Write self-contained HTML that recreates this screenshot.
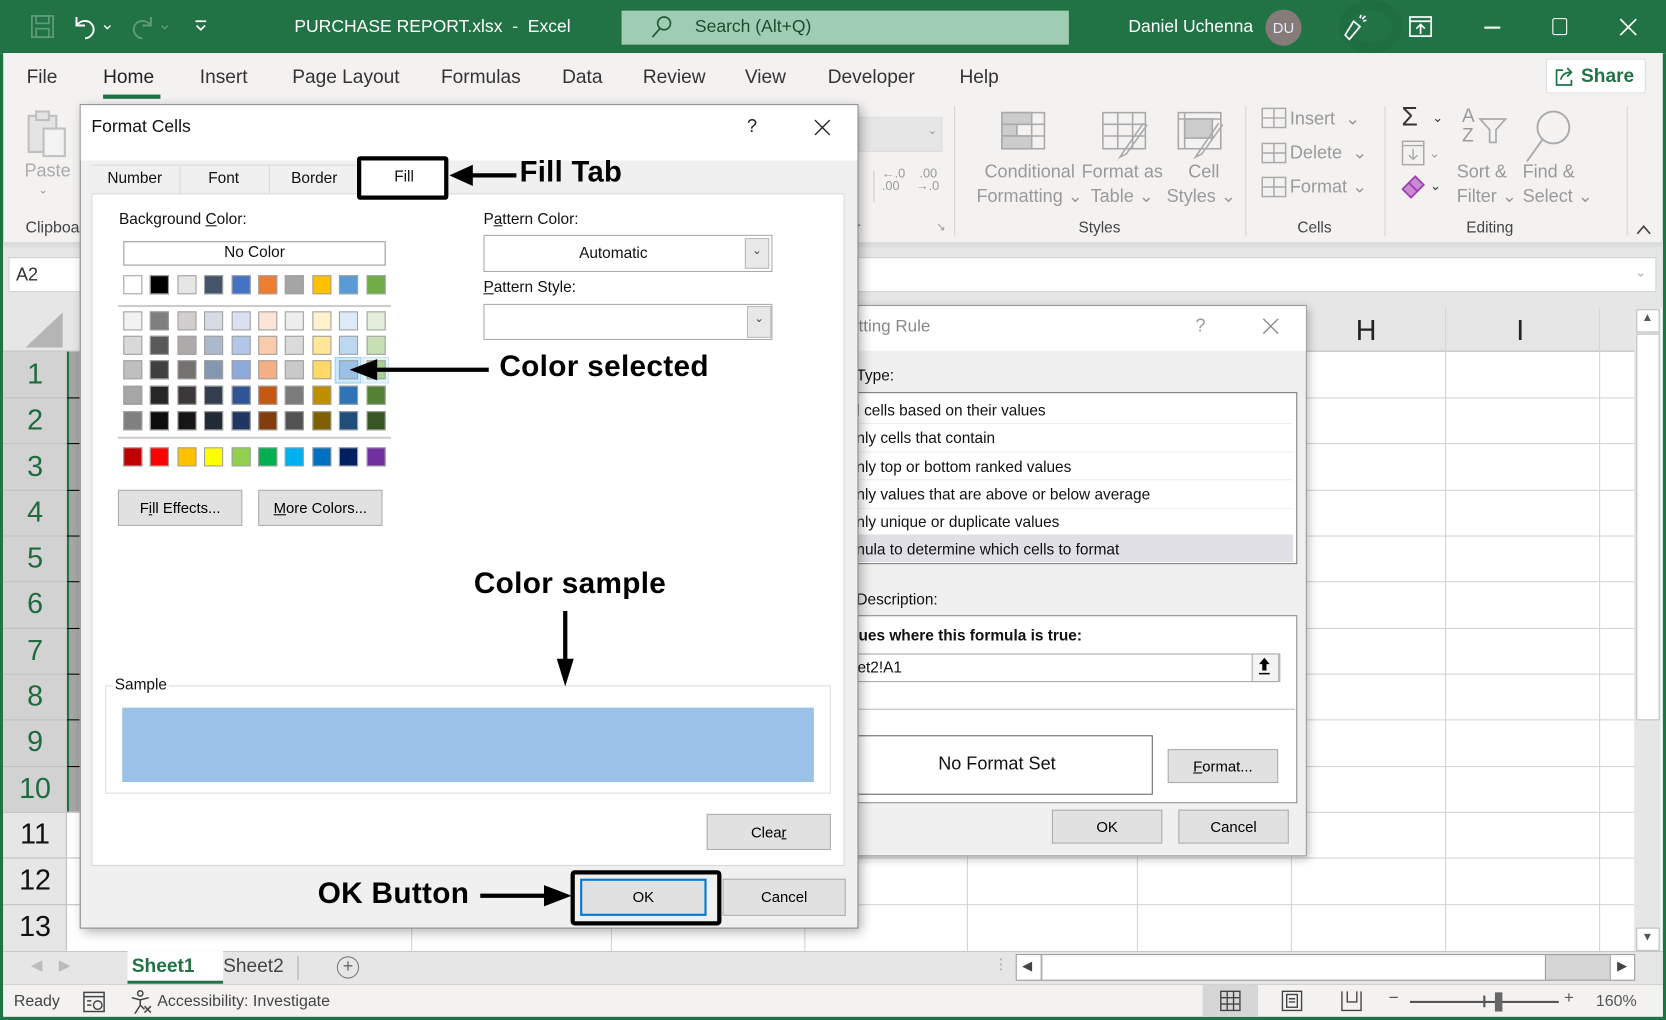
<!DOCTYPE html>
<html><head><meta charset="utf-8">
<style>
*{margin:0;padding:0;box-sizing:border-box}
html,body{width:1666px;height:1020px;overflow:hidden;background:#fff}
#w{position:absolute;left:0;top:0;width:1568px;height:960px;transform:scale(1.0625);transform-origin:0 0;font-family:"Liberation Sans",sans-serif;color:#222;overflow:hidden;background:#fff}
.a{position:absolute}
.t{position:absolute;white-space:nowrap}
.g{color:#9a9a9a}
.btn{position:absolute;background:#e1e1e1;border:1px solid #adadad;font-size:14px;text-align:center;color:#000}
.sw{position:absolute;width:18px;height:18px;border:1px solid #a0a0a0}
.ann{position:absolute;white-space:nowrap;font-weight:bold;font-size:27.5px;color:#000;letter-spacing:0.3px}
</style></head><body><div id="w">

<!-- title bar -->
<div class="a" style="left:0;top:0;width:1568px;height:50px;background:#217346"></div>
<div class="a" style="left:1260px;top:0;width:60px;height:50px;border-radius:50%;border:10px solid #1e6a40;opacity:.6"></div>
<svg class="a" style="left:28px;top:13px" width="24" height="24" viewBox="0 0 24 24" fill="none" stroke="#5e9c79" stroke-width="1.6"><rect x="2" y="2" width="20" height="20"/><rect x="6" y="2" width="12" height="7"/><rect x="6" y="14" width="12" height="8"/></svg>
<svg class="a" style="left:68px;top:12px" width="40" height="26" viewBox="0 0 40 26" fill="none" stroke="#fff" stroke-width="1.8"><path d="M4 4v8h8"/><path d="M4 12c4-6 14-6 16 2c1 6-4 10-8 10"/><path d="M30 12l3 3l3-3" stroke-width="1.3"/></svg>
<svg class="a" style="left:122px;top:12px" width="42" height="26" viewBox="0 0 42 26" fill="none" stroke="#5e9c79" stroke-width="1.8"><path d="M20 4v8h-8"/><path d="M20 12c-4-6-14-6-16 2c-1 6 4 10 8 10"/><path d="M30 12l3 3l3-3" stroke-width="1.3"/></svg>
<svg class="a" style="left:181px;top:17px" width="16" height="16" viewBox="0 0 16 16" fill="none" stroke="#fff" stroke-width="1.6"><path d="M3 3h10"/><path d="M4 7l4 4l4-4"/></svg>
<div class="t" style="left:277px;top:16px;font-size:16.5px;color:#fff">PURCHASE REPORT.xlsx&nbsp; - &nbsp;Excel</div>
<div class="a" style="left:585px;top:10px;width:421px;height:32px;background:#9fcdb3"></div>
<svg class="a" style="left:610px;top:13px" width="26" height="26" viewBox="0 0 26 26" fill="none" stroke="#1e5c3a" stroke-width="1.6"><circle cx="15" cy="9" r="6"/><path d="M11 14l-7 8"/></svg>
<div class="t" style="left:654px;top:16px;font-size:16.5px;color:#1e4a30">Search (Alt+Q)</div>
<div class="t" style="left:1062px;top:16px;font-size:16.5px;color:#fff">Daniel Uchenna</div>
<div class="a" style="left:1191px;top:9px;width:34px;height:34px;border-radius:50%;background:#857b78;color:#e8e8ff;font-size:14px;text-align:center;line-height:34px">DU</div>
<svg class="a" style="left:1262px;top:13px" width="26" height="26" viewBox="0 0 26 26" fill="none" stroke="#fff" stroke-width="1.6"><path d="M4 20l4 4l10-12l-6-5z"/><path d="M18 4l1-3M21 7l3-1M20 5l3-3"/></svg>
<svg class="a" style="left:1326px;top:15px" width="22" height="20" viewBox="0 0 22 20" fill="none" stroke="#fff" stroke-width="1.6"><rect x="1" y="1" width="20" height="18"/><path d="M1 5h20M11 17v-9M7 12l4-4l4 4"/></svg>
<div class="a" style="left:1397px;top:25px;width:15px;height:1.5px;background:#fff"></div>
<div class="a" style="left:1461px;top:17px;width:14px;height:16px;border:1.6px solid #fff;border-radius:2px"></div>
<svg class="a" style="left:1524px;top:17px" width="17" height="17" viewBox="0 0 17 17" stroke="#fff" stroke-width="1.6"><path d="M1 1l15 15M16 1L1 16"/></svg>

<!-- ribbon -->
<div class="a" style="left:0;top:50px;width:1568px;height:178px;background:#f3f2f1"></div>
<div class="a" style="left:0;top:50px;width:3px;height:910px;background:#217346"></div>
<div class="a" style="left:1565px;top:50px;width:3px;height:910px;background:#217346"></div>
<div class="t" style="left:25px;top:62px;font-size:18px;color:#333">File</div>
<div class="t" style="left:97px;top:62px;font-size:18px;color:#222">Home</div>
<div class="a" style="left:97px;top:89px;width:54px;height:4px;background:#217346"></div>
<div class="t" style="left:188px;top:62px;font-size:18px;color:#333">Insert</div>
<div class="t" style="left:275px;top:62px;font-size:18px;color:#333">Page Layout</div>
<div class="t" style="left:415px;top:62px;font-size:18px;color:#333">Formulas</div>
<div class="t" style="left:529px;top:62px;font-size:18px;color:#333">Data</div>
<div class="t" style="left:605px;top:62px;font-size:18px;color:#333">Review</div>
<div class="t" style="left:701px;top:62px;font-size:18px;color:#333">View</div>
<div class="t" style="left:779px;top:62px;font-size:18px;color:#333">Developer</div>
<div class="t" style="left:903px;top:62px;font-size:18px;color:#333">Help</div>
<div class="a" style="left:1455px;top:55px;width:94px;height:33px;background:#fff;border:1px solid #ddd;border-radius:3px"></div>
<svg class="a" style="left:1463px;top:62px" width="20" height="20" viewBox="0 0 20 20" fill="none" stroke="#217346" stroke-width="1.6"><path d="M8 4H2v14h14v-5"/><path d="M6 13c1-5 5-7 10-7M12 2l4 4l-4 4"/></svg>
<div class="t" style="left:1488px;top:61px;font-size:18px;color:#217346;font-weight:bold">Share</div>

<svg class="a" style="left:25px;top:103px" width="40" height="45" viewBox="0 0 40 45" fill="#e4e4e4" stroke="#c0c0c0" stroke-width="2"><rect x="2" y="6" width="26" height="34"/><rect x="9" y="2" width="12" height="8"/><rect x="16" y="18" width="20" height="26" fill="#f3f3f3"/></svg>
<div class="t g" style="left:23px;top:151px;font-size:17px;color:#aaa">Paste</div>
<div class="t g" style="left:36px;top:172px;font-size:11px">&#8964;</div>
<div class="t" style="left:24px;top:206px;font-size:15px;color:#444">Clipboa</div>

<div class="a" style="left:808px;top:110px;width:79px;height:33px;background:#e6e6e6;border:1px solid #ddd"></div>
<div class="t g" style="left:873px;top:116px;font-size:11px">&#8964;</div>
<div class="a" style="left:822px;top:160px;width:1px;height:30px;background:#ccc"></div>
<div class="t g" style="left:830px;top:157px;font-size:12px;line-height:12px">&larr;.0<br>.00</div>
<div class="t g" style="left:862px;top:157px;font-size:12px;line-height:12px">&nbsp;.00<br>&rarr;.0</div>
<div class="t" style="left:805px;top:206px;font-size:14px;color:#555">r</div>
<div class="t g" style="left:881px;top:207px;font-size:11px">&#8600;</div>
<div class="a" style="left:898px;top:100px;width:1px;height:122px;background:#d4d4d4"></div>
<svg class="a" style="left:941px;top:104px" width="44" height="40" viewBox="0 0 44 40" fill="none" stroke="#aaa" stroke-width="1.5"><rect x="2" y="2" width="40" height="34"/><path d="M2 13h40M2 24h40M16 2v34M30 2v34"/><rect x="2" y="2" width="28" height="11" fill="#ccc"/><rect x="2" y="13" width="14" height="11" fill="#ccc"/><rect x="2" y="24" width="28" height="12" fill="#ccc"/></svg>
<svg class="a" style="left:1036px;top:104px" width="44" height="48" viewBox="0 0 44 48" fill="none" stroke="#aaa" stroke-width="1.5"><rect x="2" y="2" width="40" height="34"/><path d="M2 13h40M2 24h40M16 2v34M30 2v34"/><path d="M40 12L22 38l-4 6l6-3l20-28"/></svg>
<svg class="a" style="left:1107px;top:104px" width="44" height="48" viewBox="0 0 44 48" fill="none" stroke="#aaa" stroke-width="1.5"><rect x="2" y="2" width="40" height="34"/><path d="M2 8h40M8 2v34"/><rect x="8" y="8" width="26" height="18" fill="#ccc"/><path d="M40 12L22 38l-4 6l6-3l20-28"/></svg>
<div class="t g" style="left:919px;top:150px;font-size:17px;line-height:23px;text-align:center">Conditional<br>Formatting &#8964;</div>
<div class="t g" style="left:1018px;top:150px;font-size:17px;line-height:23px;text-align:center">Format as<br>Table &#8964;</div>
<div class="t g" style="left:1098px;top:150px;font-size:17px;line-height:23px;text-align:center">&nbsp;Cell<br>Styles &#8964;</div>
<div class="t" style="left:1015px;top:207px;font-size:14.5px;color:#444">Styles</div>
<div class="a" style="left:1172px;top:100px;width:1px;height:122px;background:#d4d4d4"></div>
<svg class="a" style="left:1187px;top:101px" width="26" height="90" viewBox="0 0 26 90" fill="none" stroke="#aaa" stroke-width="1.4"><rect x="1" y="1" width="22" height="18"/><path d="M1 10h22M12 1v18"/><rect x="1" y="34" width="22" height="18"/><path d="M1 43h22M12 34v18"/><rect x="1" y="66" width="22" height="18"/><path d="M1 75h22M12 66v18"/></svg>
<div class="t g" style="left:1214px;top:102px;font-size:17px">Insert &nbsp;&#8964;</div>
<div class="t g" style="left:1214px;top:134px;font-size:17px">Delete &nbsp;&#8964;</div>
<div class="t g" style="left:1214px;top:166px;font-size:17px">Format &#8964;</div>
<div class="t" style="left:1221px;top:207px;font-size:14.5px;color:#444">Cells</div>
<div class="a" style="left:1303px;top:100px;width:1px;height:122px;background:#d4d4d4"></div>
<div class="t" style="left:1319px;top:96px;font-size:25px;color:#333">&Sigma;</div>
<div class="t" style="left:1348px;top:104px;font-size:12px;color:#333">&#8964;</div>
<svg class="a" style="left:1319px;top:132px" width="22" height="24" viewBox="0 0 22 24" fill="none" stroke="#aaa" stroke-width="1.4"><rect x="1" y="1" width="20" height="22"/><path d="M1 5h20M11 8v10M7 14l4 4l4-4"/></svg>
<div class="t g" style="left:1345px;top:137px;font-size:12px">&#8964;</div>
<svg class="a" style="left:1318px;top:164px" width="24" height="24" viewBox="0 0 24 24" fill="#c98ad4" stroke="#a03cb0" stroke-width="1.6"><path d="M2 14l8 8l12-12l-8-8z"/><path d="M8 8l8 8" /></svg>
<div class="t" style="left:1346px;top:168px;font-size:12px;color:#333">&#8964;</div>
<div class="t g" style="left:1376px;top:100px;font-size:18px;line-height:18px">A<br>Z</div>
<svg class="a" style="left:1391px;top:110px" width="28" height="26" viewBox="0 0 28 26" fill="none" stroke="#aaa" stroke-width="1.6"><path d="M2 2h24l-9 10v12h-6V12z"/></svg>
<svg class="a" style="left:1434px;top:100px" width="48" height="54" viewBox="0 0 48 54" fill="none" stroke="#aaa" stroke-width="1.8"><circle cx="28" cy="20" r="15"/><path d="M18 31L3 52"/></svg>
<div class="t g" style="left:1371px;top:150px;font-size:17px;line-height:23px">Sort &amp;<br>Filter &#8964;</div>
<div class="t g" style="left:1433px;top:150px;font-size:17px;line-height:23px">Find &amp;<br>Select &#8964;</div>
<div class="t" style="left:1380px;top:207px;font-size:14.5px;color:#444">Editing</div>
<div class="a" style="left:1531px;top:100px;width:1px;height:122px;background:#d4d4d4"></div>
<svg class="a" style="left:1539px;top:211px" width="16" height="10" viewBox="0 0 16 10" fill="none" stroke="#444" stroke-width="1.6"><path d="M2 9l6-7l6 7"/></svg>

<!-- formula bar area -->
<div class="a" style="left:3px;top:228px;width:1562px;height:62px;background:#e6e6e6"></div>
<div class="a" style="left:3px;top:228px;width:1562px;height:6px;background:linear-gradient(#d6d6d6,#e6e6e6)"></div>
<div class="a" style="left:8px;top:242px;width:70px;height:33px;background:#fff;border:1px solid #d0d0d0"></div>
<div class="t" style="left:15px;top:249px;font-size:17px;color:#333">A2</div>
<div class="a" style="left:800px;top:242px;width:759px;height:33px;background:#fff;border:1px solid #d0d0d0"></div>
<div class="t" style="left:1539px;top:249px;font-size:12px;color:#aaa">&#8964;</div>

<!-- grid -->
<div class="a" style="left:3px;top:290px;width:1535px;height:41px;background:#e6e6e6;border-bottom:1px solid #bdbdbd"></div>
<svg class="a" style="left:22px;top:292px" width="38" height="36"><path d="M37 2V35H2z" fill="#b5b5b5"/></svg>
<div class="a" style="left:1215px;top:290px;width:1px;height:605px;background:#d4d4d4"></div>
<div class="a" style="left:1360px;top:290px;width:1px;height:605px;background:#d4d4d4"></div>
<div class="a" style="left:1505px;top:290px;width:1px;height:605px;background:#d4d4d4"></div>
<div class="a" style="left:910px;top:331px;width:1px;height:564px;background:#d4d4d4"></div>
<div class="a" style="left:1070px;top:331px;width:1px;height:564px;background:#d4d4d4"></div>
<div class="a" style="left:387px;top:331px;width:1px;height:564px;background:#d4d4d4"></div>
<div class="a" style="left:575px;top:331px;width:1px;height:564px;background:#d4d4d4"></div>
<div class="a" style="left:757px;top:331px;width:1px;height:564px;background:#d4d4d4"></div>
<div class="t" style="left:1276px;top:296px;font-size:27px;color:#222">H</div>
<div class="t" style="left:1427px;top:296px;font-size:27px;color:#222">I</div>
<!-- row headers -->
<div class="a" style="left:3px;top:331px;width:60px;height:564px;background:#e6e6e6;border-right:1px solid #bdbdbd"></div>
<div class="a" style="left:3px;top:331px;width:60px;height:433px;background:#d2d2d2"></div>
<div class="a" style="left:63px;top:331px;width:12px;height:433px;background:#a6a6a6;border-left:2px solid #217346"></div>
<div style="position:absolute;left:0;top:0">
<div class="a" style="left:3px;top:374px;width:72px;height:1px;background:#c0c0c0"></div>
<div class="a" style="left:3px;top:417px;width:72px;height:1px;background:#c0c0c0"></div>
<div class="a" style="left:3px;top:461px;width:72px;height:1px;background:#c0c0c0"></div>
<div class="a" style="left:3px;top:504px;width:72px;height:1px;background:#c0c0c0"></div>
<div class="a" style="left:3px;top:547px;width:72px;height:1px;background:#c0c0c0"></div>
<div class="a" style="left:3px;top:591px;width:72px;height:1px;background:#c0c0c0"></div>
<div class="a" style="left:3px;top:634px;width:72px;height:1px;background:#c0c0c0"></div>
<div class="a" style="left:3px;top:677px;width:72px;height:1px;background:#c0c0c0"></div>
<div class="a" style="left:3px;top:721px;width:72px;height:1px;background:#c0c0c0"></div>
<div class="a" style="left:3px;top:764px;width:72px;height:1px;background:#c0c0c0"></div>
<div class="a" style="left:3px;top:807px;width:72px;height:1px;background:#c0c0c0"></div>
<div class="a" style="left:3px;top:851px;width:72px;height:1px;background:#c0c0c0"></div>
<div class="a" style="left:63px;top:374px;width:12px;height:1px;background:#000"></div>
<div class="a" style="left:63px;top:417px;width:12px;height:1px;background:#000"></div>
<div class="a" style="left:63px;top:461px;width:12px;height:1px;background:#000"></div>
<div class="a" style="left:63px;top:504px;width:12px;height:1px;background:#000"></div>
<div class="a" style="left:63px;top:547px;width:12px;height:1px;background:#000"></div>
<div class="a" style="left:63px;top:591px;width:12px;height:1px;background:#000"></div>
<div class="a" style="left:63px;top:634px;width:12px;height:1px;background:#000"></div>
<div class="a" style="left:63px;top:677px;width:12px;height:1px;background:#000"></div>
<div class="a" style="left:63px;top:721px;width:12px;height:1px;background:#000"></div>
</div>
<!-- grid row lines right side -->
<div class="a" style="left:805px;top:374px;width:733px;height:1px;background:#d4d4d4"></div>
<div class="a" style="left:805px;top:417px;width:733px;height:1px;background:#d4d4d4"></div>
<div class="a" style="left:805px;top:461px;width:733px;height:1px;background:#d4d4d4"></div>
<div class="a" style="left:805px;top:504px;width:733px;height:1px;background:#d4d4d4"></div>
<div class="a" style="left:805px;top:547px;width:733px;height:1px;background:#d4d4d4"></div>
<div class="a" style="left:805px;top:591px;width:733px;height:1px;background:#d4d4d4"></div>
<div class="a" style="left:805px;top:634px;width:733px;height:1px;background:#d4d4d4"></div>
<div class="a" style="left:805px;top:677px;width:733px;height:1px;background:#d4d4d4"></div>
<div class="a" style="left:805px;top:721px;width:733px;height:1px;background:#d4d4d4"></div>
<div class="a" style="left:805px;top:764px;width:733px;height:1px;background:#d4d4d4"></div>
<div class="a" style="left:805px;top:807px;width:733px;height:1px;background:#d4d4d4"></div>
<div class="a" style="left:805px;top:851px;width:733px;height:1px;background:#d4d4d4"></div>
<div style="position:absolute;left:3px;top:331px;width:60px;font-size:27px;text-align:center;line-height:43.3px">
<div style="color:#1e6b40">1</div><div style="color:#1e6b40">2</div><div style="color:#1e6b40">3</div><div style="color:#1e6b40">4</div><div style="color:#1e6b40">5</div><div style="color:#1e6b40">6</div><div style="color:#1e6b40">7</div><div style="color:#1e6b40">8</div><div style="color:#1e6b40">9</div><div style="color:#1e6b40">10</div><div style="color:#111">11</div><div style="color:#111">12</div><div style="color:#111">13</div></div>

<!-- vertical scroll -->
<div class="a" style="left:1538px;top:290px;width:25px;height:605px;background:#e6e6e6"></div>
<div class="a" style="left:1540px;top:291px;width:22px;height:22px;background:#fff;border:1px solid #bbb"></div>
<div class="t" style="left:1545px;top:293px;font-size:11px;color:#555">&#9650;</div>
<div class="a" style="left:1540px;top:314px;width:22px;height:364px;background:#fff;border:1px solid #bbb"></div>
<div class="a" style="left:1540px;top:873px;width:22px;height:22px;background:#fff;border:1px solid #bbb"></div>
<div class="t" style="left:1545px;top:876px;font-size:11px;color:#555">&#9660;</div>

<!-- sheet tabs -->
<div class="a" style="left:3px;top:895px;width:1562px;height:31px;background:#e6e6e6;border-top:1px solid #c8c8c8"></div>
<div class="t" style="left:29px;top:900px;font-size:14px;color:#bbb">&#9664;&nbsp;&nbsp;&nbsp;&nbsp;&#9654;</div>
<div class="a" style="left:120px;top:895px;width:90px;height:31px;background:#fff;border-bottom:3px solid #217346"></div>
<div class="t" style="left:124px;top:899px;font-size:18px;font-weight:bold;color:#217346">Sheet1</div>
<div class="t" style="left:210px;top:899px;font-size:18px;color:#444">Sheet2</div>
<div class="a" style="left:280px;top:900px;width:1px;height:22px;background:#aaa"></div>
<div class="a" style="left:317px;top:900px;width:21px;height:21px;border:1.5px solid #777;border-radius:50%;text-align:center;font-size:17px;line-height:18px;color:#666">+</div>
<div class="t" style="left:935px;top:899px;font-size:14px;color:#aaa">&#8942;</div>
<div class="a" style="left:956px;top:898px;width:583px;height:25px;background:#d6d6d6;border:1px solid #999"></div>
<div class="a" style="left:980px;top:899px;width:475px;height:23px;background:#fff;border-left:1px solid #999;border-right:1px solid #999"></div>
<div class="a" style="left:957px;top:899px;width:22px;height:23px;background:#fff"></div>
<div class="t" style="left:962px;top:902px;font-size:12px;color:#444">&#9664;</div>
<div class="a" style="left:1515px;top:899px;width:23px;height:23px;background:#fff;border-left:1px solid #999"></div>
<div class="t" style="left:1522px;top:902px;font-size:12px;color:#444">&#9654;</div>

<!-- status bar -->
<div class="a" style="left:3px;top:926px;width:1562px;height:32px;background:#f3f2f1;border-top:1px solid #d0d0d0"></div>
<div class="a" style="left:0;top:957px;width:1568px;height:3px;background:#217346"></div>
<div class="t" style="left:13px;top:934px;font-size:15px;color:#444">Ready</div>
<svg class="a" style="left:78px;top:932px" width="22" height="22" viewBox="0 0 22 22" fill="none" stroke="#444" stroke-width="1.4"><rect x="1" y="2" width="19" height="18"/><path d="M1 6h19M4 10h4M4 14h4"/><circle cx="14" cy="14" r="4"/></svg>
<svg class="a" style="left:122px;top:931px" width="24" height="24" viewBox="0 0 24 24" fill="none" stroke="#444" stroke-width="1.4"><circle cx="10" cy="4" r="2.5"/><path d="M2 8l8 2l8-2M10 10v5l-5 8M10 15l4 4M14 16l6 6M20 16l-6 6"/></svg>
<div class="t" style="left:148px;top:934px;font-size:15px;color:#444">Accessibility: Investigate</div>
<div class="a" style="left:1132px;top:927px;width:52px;height:30px;background:#d6d6d6"></div>
<svg class="a" style="left:1148px;top:932px" width="20" height="20" viewBox="0 0 20 20" fill="none" stroke="#444" stroke-width="1.3"><rect x="1" y="1" width="18" height="18"/><path d="M1 7h18M1 13h18M7 1v18M13 1v18"/></svg>
<svg class="a" style="left:1206px;top:932px" width="20" height="20" viewBox="0 0 20 20" fill="none" stroke="#444" stroke-width="1.3"><rect x="1" y="1" width="18" height="18"/><rect x="5" y="4" width="10" height="12"/><path d="M7 8h6M7 11h6"/></svg>
<svg class="a" style="left:1262px;top:932px" width="20" height="20" viewBox="0 0 20 20" fill="none" stroke="#444" stroke-width="1.3"><path d="M1 1v18h18V1M6 1v10h9V1"/></svg>
<div class="t" style="left:1307px;top:931px;font-size:16px;color:#555">&minus;</div>
<div class="a" style="left:1327px;top:942px;width:140px;height:2px;background:#555"></div>
<div class="a" style="left:1396px;top:937px;width:2px;height:11px;background:#555"></div>
<div class="a" style="left:1407px;top:934px;width:7px;height:18px;background:#666"></div>
<div class="t" style="left:1472px;top:931px;font-size:16px;color:#555">+</div>
<div class="t" style="left:1502px;top:934px;font-size:15px;color:#555">160%</div>

<!-- Conditional formatting rule dialog -->
<div class="a" style="left:790px;top:287px;width:440px;height:519px;background:#f0f0f0;border:1px solid #999;box-shadow:2px 3px 8px rgba(0,0,0,.25)"></div>
<div class="a" style="left:791px;top:288px;width:438px;height:42px;background:#fff"></div>
<div class="t" style="left:808px;top:299px;font-size:16px;color:#888">tting Rule</div>
<div class="t" style="left:1125px;top:297px;font-size:17px;color:#999">?</div>
<svg class="a" style="left:1188px;top:299px" width="16" height="16" stroke="#888" stroke-width="1.2"><path d="M1 1l14 14M15 1L1 15"/></svg>
<div class="t" style="left:806px;top:346px;font-size:14.5px;color:#111">Type:</div>
<div class="a" style="left:795px;top:369px;width:426px;height:162px;background:#fff;border:1.5px solid #7a7a7a"></div>
<div class="a" style="left:797px;top:503px;width:420px;height:26px;background:#e0e0e6"></div>
<div class="a" style="left:797px;top:398px;width:420px;height:1px;background:#eee"></div>
<div class="a" style="left:797px;top:425px;width:420px;height:1px;background:#eee"></div>
<div class="a" style="left:797px;top:451px;width:420px;height:1px;background:#eee"></div>
<div class="a" style="left:797px;top:478px;width:420px;height:1px;background:#eee"></div>
<div style="position:absolute;left:806px;top:374px;font-size:14.5px;line-height:26.3px;color:#111;white-space:nowrap">
<div>l cells based on their values</div><div>nly cells that contain</div><div>nly top or bottom ranked values</div><div>nly values that are above or below average</div><div>nly unique or duplicate values</div><div>nula to determine which cells to format</div></div>
<div class="t" style="left:806px;top:557px;font-size:14.5px;color:#111">Description:</div>
<div class="a" style="left:795px;top:579px;width:426px;height:177px;background:#fff;border:1px solid #8a8a8a"></div>
<div class="t" style="left:808px;top:591px;font-size:14.5px;font-weight:bold;color:#111">ues where this formula is true:</div>
<div class="a" style="left:797px;top:615px;width:408px;height:27px;background:#fff;border:1px solid #aaa"></div>
<div class="t" style="left:807px;top:621px;font-size:14.5px;color:#111">et2!A1</div>
<div class="a" style="left:1178px;top:615px;width:26px;height:27px;background:#f4f4f4;border:1px solid #aaa"></div>
<svg class="a" style="left:1183px;top:618px" width="14" height="18"><path d="M7 1l5 6h-3v6h-4V7H2z" fill="#000"/><path d="M2 16h10" stroke="#000" stroke-width="1.5"/></svg>
<div class="a" style="left:797px;top:667px;width:422px;height:1px;background:#bbb"></div>
<div class="a" style="left:797px;top:692px;width:288px;height:56px;background:#fff;border:1px solid #666"></div>
<div class="t" style="left:883px;top:709px;font-size:17px;color:#111">No Format Set</div>
<div class="btn" style="left:1099px;top:705px;width:104px;height:32px;line-height:30px"><u>F</u>ormat...</div>
<div class="btn" style="left:990px;top:762px;width:104px;height:32px;line-height:30px">OK</div>
<div class="btn" style="left:1109px;top:762px;width:104px;height:32px;line-height:30px">Cancel</div>

<!-- Format Cells dialog -->
<div class="a" style="left:75px;top:98px;width:733px;height:776px;background:#f0f0f0;border:1px solid #888;box-shadow:3px 3px 10px rgba(0,0,0,.3)"></div>
<div class="a" style="left:76px;top:99px;width:731px;height:52px;background:#fff"></div>
<div class="t" style="left:86px;top:110px;font-size:16.5px;color:#111">Format Cells</div>
<div class="t" style="left:703px;top:109px;font-size:17px;color:#222">?</div>
<svg class="a" style="left:766px;top:112px" width="16" height="16" stroke="#222" stroke-width="1.3"><path d="M1 1l14 14M15 1L1 15"/></svg>
<div class="a" style="left:86px;top:155px;width:250px;height:1px;background:#d8d8d8"></div>
<div class="a" style="left:169px;top:155px;width:1px;height:28px;background:#d8d8d8"></div>
<div class="a" style="left:253px;top:155px;width:1px;height:28px;background:#d8d8d8"></div>
<div class="t" style="left:101px;top:160px;font-size:14.5px;color:#111">Number</div>
<div class="t" style="left:196px;top:160px;font-size:14.5px;color:#111">Font</div>
<div class="t" style="left:274px;top:160px;font-size:14.5px;color:#111">Border</div>
<div class="a" style="left:86px;top:182px;width:709px;height:633px;background:#fff;border:1px solid #d8d8d8"></div>
<div class="a" style="left:336px;top:147px;width:86px;height:41px;background:#fff;border:4px solid #000;border-radius:3px"></div>
<div class="t" style="left:371px;top:159px;font-size:14.5px;color:#111">Fill</div>

<div class="t" style="left:112px;top:199px;font-size:14.5px;color:#111">Background <u>C</u>olor:</div>
<div class="a" style="left:116px;top:227px;width:247px;height:23px;border:1px solid #999;background:#fff;text-align:center;font-size:14.5px;line-height:21px;color:#111">No Color</div>
<div class="a" style="left:111px;top:287px;width:257px;height:1.5px;background:#ccc"></div>
<div class="a" style="left:111px;top:411px;width:257px;height:1.5px;background:#ccc"></div>
<div class="a" style="left:315px;top:336px;width:25px;height:25px;border:1px solid #9cd0f5;background:#cce8fb"></div>
<div class="a" style="left:341px;top:336px;width:25px;height:25px;border:1px solid #c8e4f8;background:#e5f3fd"></div>
<div id="sw"></div>

<div class="t" style="left:455px;top:199px;font-size:14.5px;color:#111">P<u>a</u>ttern Color:</div>
<div class="a" style="left:455px;top:221px;width:272px;height:35px;border:1px solid #aaa;background:#fff"></div>
<div class="t" style="left:545px;top:231px;font-size:14.5px;color:#111">Automatic</div>
<div class="a" style="left:701px;top:224px;width:23px;height:29px;background:#e8e8e8;border:1px solid #bbb;text-align:center;font-size:11px;color:#444;line-height:22px">&#8964;</div>
<div class="t" style="left:455px;top:263px;font-size:14.5px;color:#111"><u>P</u>attern Style:</div>
<div class="a" style="left:455px;top:286px;width:272px;height:34px;border:1px solid #aaa;background:#fff"></div>
<div class="a" style="left:703px;top:288px;width:23px;height:30px;background:#e8e8e8;border:1px solid #bbb;text-align:center;font-size:11px;color:#444;line-height:22px">&#8964;</div>

<div class="btn" style="left:111px;top:461px;width:117px;height:34px;line-height:32px">F<u>i</u>ll Effects...</div>
<div class="btn" style="left:243px;top:461px;width:117px;height:34px;line-height:32px"><u>M</u>ore Colors...</div>

<div class="a" style="left:99px;top:645px;width:683px;height:102px;border:1px solid #ddd"></div>
<div class="t" style="left:106px;top:637px;font-size:14.5px;color:#111;background:#fff;padding:0 2px">Sample</div>
<div class="a" style="left:115px;top:666px;width:651px;height:70px;background:#9bc2e6"></div>
<div class="btn" style="left:665px;top:766px;width:117px;height:34px;line-height:32px">Clea<u>r</u></div>

<div class="a" style="left:537px;top:819px;width:142px;height:52px;border:4px solid #000;border-radius:4px"></div>
<div class="btn" style="left:546px;top:827px;width:119px;height:35px;line-height:31px;border:2px solid #0078d7">OK</div>
<div class="btn" style="left:680px;top:827px;width:116px;height:35px;line-height:33px">Cancel</div>

<!-- annotations -->
<svg class="a" style="left:420px;top:150px" width="70" height="30"><path d="M20 15H66" stroke="#000" stroke-width="4"/><path d="M3 15l22-10v20z" fill="#000"/></svg>
<div class="ann" style="left:489px;top:146px">Fill Tab</div>
<svg class="a" style="left:325px;top:333px" width="140" height="30"><path d="M25 15H135" stroke="#000" stroke-width="4"/><path d="M4 15l26-10v20z" fill="#000"/></svg>
<div class="ann" style="left:470px;top:329px;font-size:28px">Color selected</div>
<div class="ann" style="left:446px;top:533px;font-size:28px">Color sample</div>
<svg class="a" style="left:520px;top:573px" width="24" height="75"><path d="M12 2V55" stroke="#000" stroke-width="4"/><path d="M12 73l-8-26h16z" fill="#000"/></svg>
<div class="ann" style="left:299px;top:825px;font-size:28px">OK Button</div>
<svg class="a" style="left:450px;top:830px" width="90" height="26"><path d="M2 13H70" stroke="#000" stroke-width="4"/><path d="M88 13l-26-10v20z" fill="#000"/></svg>

<script>
(function(){
var rows=[
["#ffffff","#000000","#e7e6e6","#44546a","#4472c4","#ed7d31","#a5a5a5","#ffc000","#5b9bd5","#70ad47"],
["#f2f2f2","#7f7f7f","#d0cece","#d6dce4","#d9e1f2","#fce4d6","#ededed","#fff2cc","#ddebf7","#e2efda"],
["#d9d9d9","#595959","#aeaaaa","#acb9ca","#b4c6e7","#f8cbad","#dbdbdb","#ffe699","#bdd7ee","#c6e0b4"],
["#bfbfbf","#404040","#757171","#8497b0","#8ea9db","#f4b084","#c9c9c9","#ffd966","#9bc2e6","#a9d08e"],
["#a6a6a6","#262626","#3a3838","#333f4f","#305496","#c65911","#7b7b7b","#bf8f00","#2f75b5","#548235"],
["#808080","#0d0d0d","#161616","#222b35","#203764","#833c0c","#525252","#806000","#1f4e78","#375623"],
["#c00000","#ff0000","#ffc000","#ffff00","#92d050","#00b050","#00b0f0","#0070c0","#002060","#7030a0"]];
var ys=[259,293,316,339,363,387,421],h="";
for(var r=0;r<rows.length;r++)for(var c=0;c<10;c++){
h+='<div class="sw" style="left:'+(116+c*25.4).toFixed(1)+'px;top:'+ys[r]+'px;background:'+rows[r][c]+'"></div>';}
var d=document.getElementById("sw");d.outerHTML=h;
})();
</script>
</div></body></html>
